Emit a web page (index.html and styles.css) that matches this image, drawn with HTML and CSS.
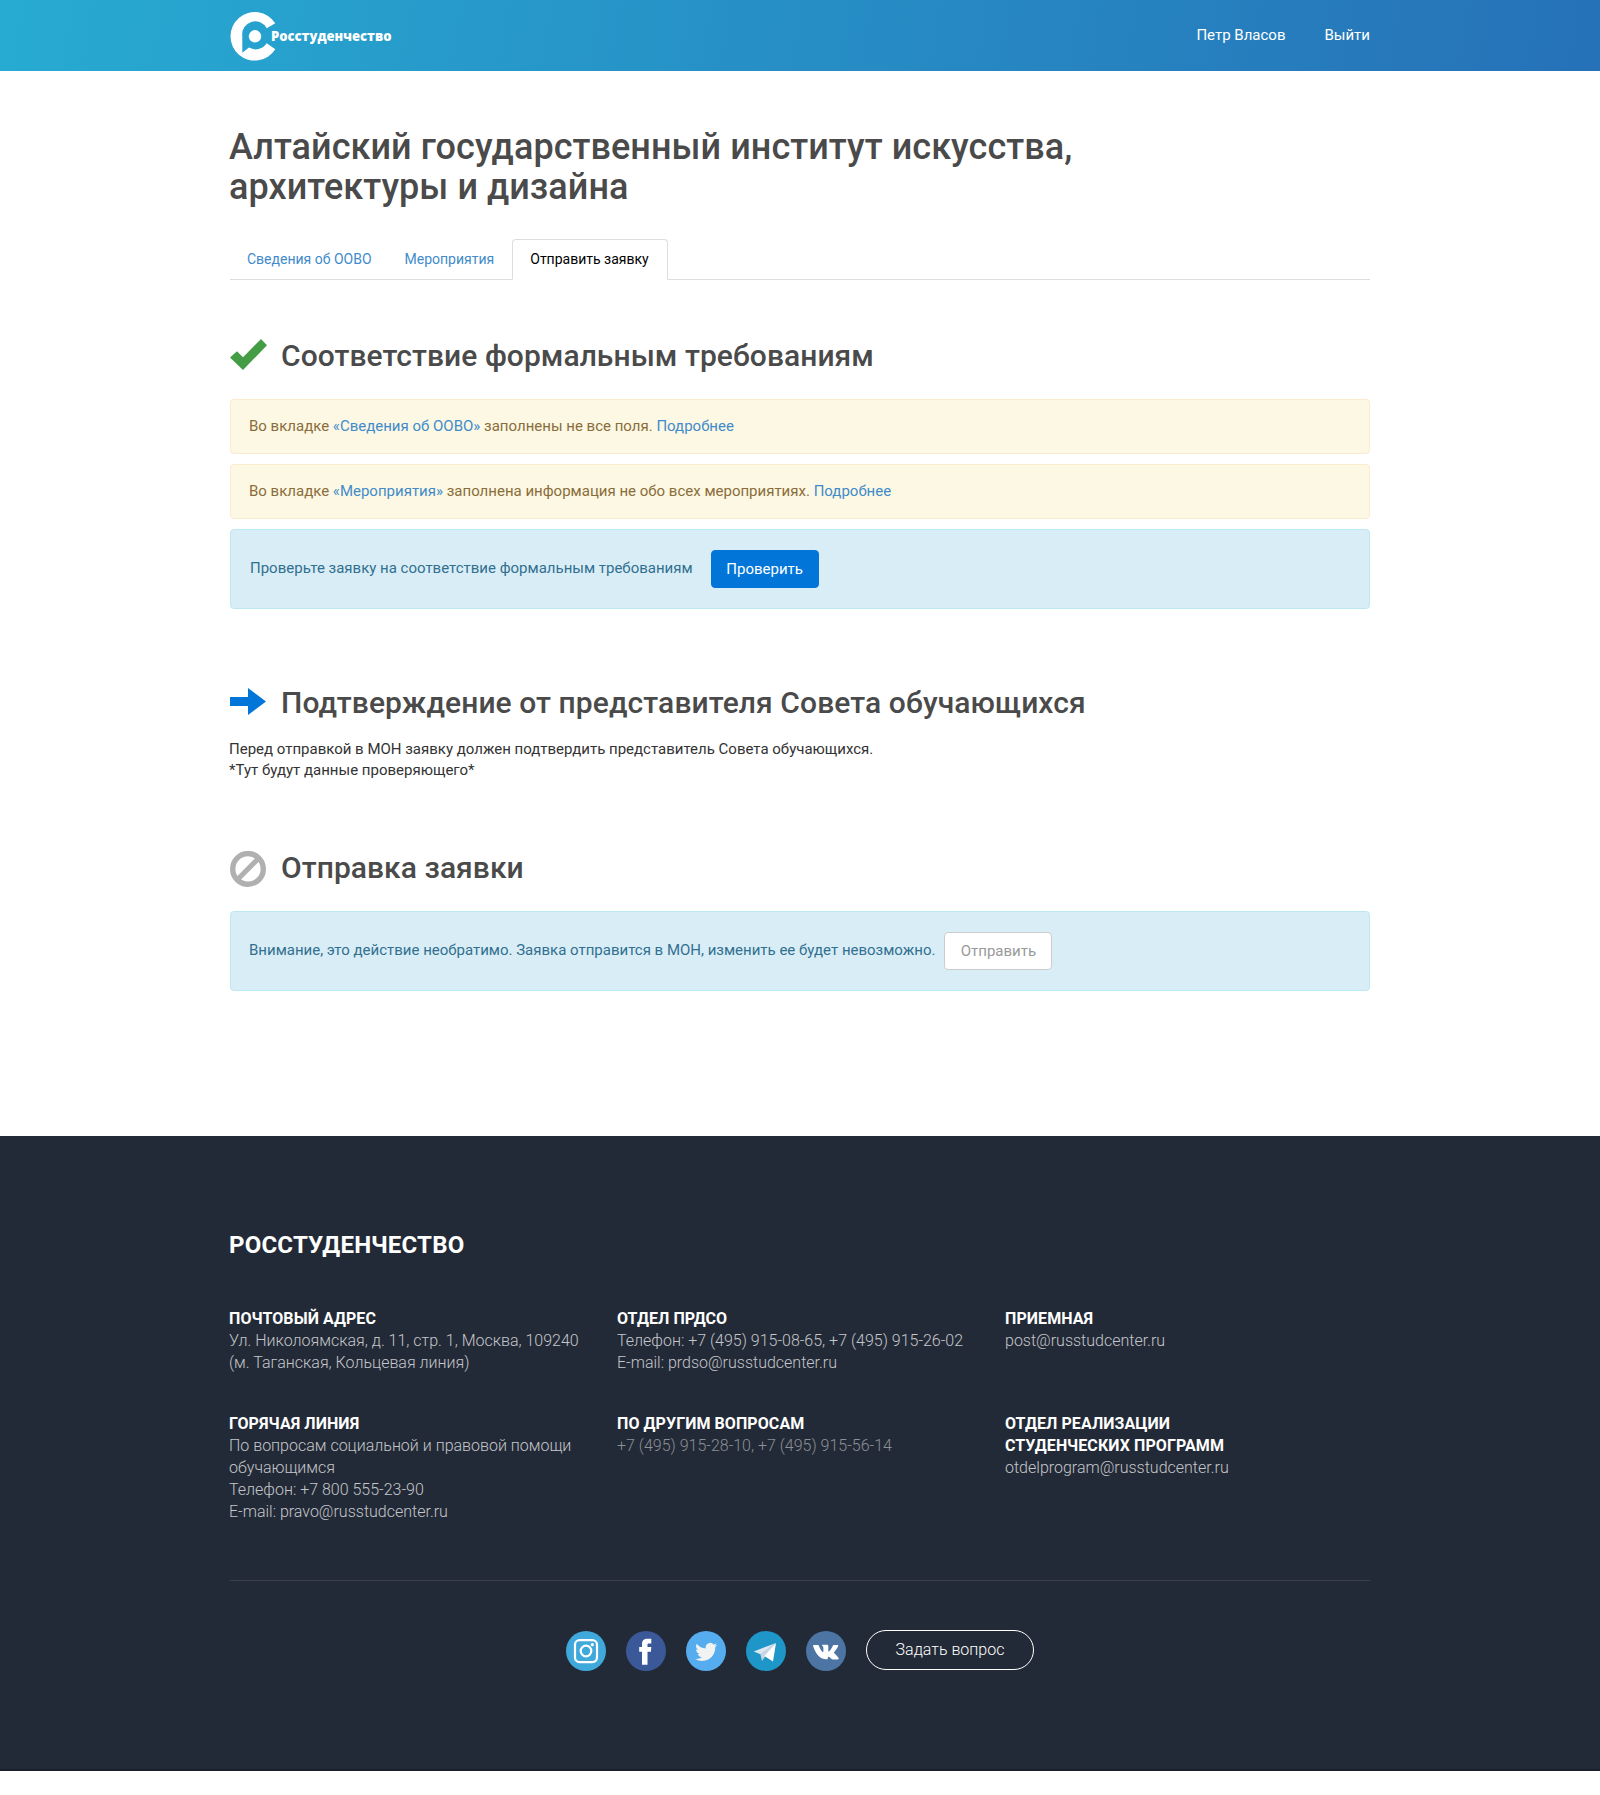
FILE: index.html
```html
<!DOCTYPE html>
<html lang="ru">
<head>
<meta charset="utf-8">
<title>Росстуденчество</title>
<link rel="stylesheet" href="styles.css">
</head>
<body>
<header class="header">
  <div class="container header-inner">
    <a class="logo" href="#">
      <svg width="170" height="71" viewBox="230 0 170 71" fill="#fff">
        <path d="M275.3 23.3A24.3 24.3 0 1 0 275.3 49.3L266.7 43.3A13.2 13.2 0 0 1 249 47.6L242.3 52.7V36A13 13 0 0 1 266.7 28.3Z"/>
        <circle cx="255" cy="36.3" r="6.2"/>
        <text class="logo-text" x="271" y="40.700" textLength="120.500" lengthAdjust="spacingAndGlyphs">Росстуденчество</text>
      </svg>
    </a>
    <nav class="user-nav"><a href="#">Петр Власов</a><a href="#">Выйти</a></nav>
  </div>
</header>

<main class="container main">
  <h1 class="title">Алтайский государственный институт искусства,<br>архитектуры и дизайна</h1>
  <ul class="tabs">
    <li><a class="tab tab-first" href="#">Сведения об ООВО</a></li>
    <li><a class="tab" href="#">Мероприятия</a></li>
    <li><a class="tab tab-active" href="#">Отправить заявку</a></li>
  </ul>

  <section class="step">
    <h2 class="step-title">
      <svg class="icon" width="37" height="37" viewBox="0 0 37 37"><path fill="#449d44" d="M0 18.5L7 12.3L13 18.3L31 0L37 6.3L13 31Z"/></svg>
      <span>Соответствие формальным требованиям</span>
    </h2>
    <div class="alert alert-warning">Во вкладке <a href="#">«Сведения об ООВО»</a> заполнены не все поля. <a href="#">Подробнее</a></div>
    <div class="alert alert-warning">Во вкладке <a href="#">«Мероприятия»</a> заполнена информация не обо всех мероприятиях. <a href="#">Подробнее</a></div>
    <div class="alert alert-info alert-check"><span>Проверьте заявку на соответствие формальным требованиям</span><button class="btn btn-primary">Проверить</button></div>
  </section>

  <section class="step step-confirm">
    <h2 class="step-title">
      <svg class="icon" width="37" height="37" viewBox="0 0 37 37"><path fill="#0275d8" d="M0 11H18V2L36 15.5L18 29V20H0Z"/></svg>
      <span>Подтверждение от представителя Совета обучающихся</span>
    </h2>
    <p class="text">Перед отправкой в МОН заявку должен подтвердить представитель Совета обучающихся.<br>*Тут будут данные проверяющего*</p>
  </section>

  <section class="step step-send">
    <h2 class="step-title">
      <svg class="icon" width="37" height="37" viewBox="0 1 37 37" fill="none" stroke="#b0b0b0"><circle cx="18" cy="18.9" r="15.3" stroke-width="5.4"/><path stroke-width="5" d="M7.5 29.4L28.5 8.4"/></svg>
      <span>Отправка заявки</span>
    </h2>
    <div class="alert alert-info"><span>Внимание, это действие необратимо. Заявка отправится в МОН, изменить ее будет невозможно.</span><button class="btn btn-default" disabled>Отправить</button></div>
  </section>
</main>

<footer class="footer">
  <div class="container">
    <div class="footer-title">РОССТУДЕНЧЕСТВО</div>
    <div class="contacts">
      <div><b>ПОЧТОВЫЙ АДРЕС</b><br>Ул. Николоямская, д. 11, стр. 1, Москва, 109240<br>(м. Таганская, Кольцевая линия)</div>
      <div><b>ОТДЕЛ ПРДСО</b><br>Телефон: +7 (495) 915-08-65, +7 (495) 915-26-02<br>E-mail: prdso@russtudcenter.ru</div>
      <div><b>ПРИЕМНАЯ</b><br>post@russtudcenter.ru</div>
      <div><b>ГОРЯЧАЯ ЛИНИЯ</b><br>По вопросам социальной и правовой помощи<br>обучающимся<br>Телефон: +7 800 555-23-90<br>E-mail: pravo@russtudcenter.ru</div>
      <div><b>ПО ДРУГИМ ВОПРОСАМ</b><br><span class="muted">+7 (495) 915-28-10, +7 (495) 915-56-14</span></div>
      <div><b>ОТДЕЛ РЕАЛИЗАЦИИ<br>СТУДЕНЧЕСКИХ ПРОГРАММ</b><br>otdelprogram@russtudcenter.ru</div>
    </div>
    <div class="social">
      <a href="#"><svg width="40" height="40" viewBox="0 0 40 40"><circle cx="20" cy="20" r="20" fill="#40a9dc"/><g fill="none" stroke="#fff" stroke-width="2.2"><rect x="9" y="9.1" width="22" height="22" rx="4.5"/><circle cx="20" cy="20" r="5.3"/></g><circle cx="26.3" cy="13.7" r="1.6" fill="#fff"/></svg></a>
      <a href="#"><svg width="40" height="40" viewBox="0 0 40 40"><circle cx="20" cy="20" r="20" fill="#3b5998"/><path fill="#fff" d="M16 33.7V20.7H13.2V16H16V13.2C16 9.5 18 7.8 21.5 7.8H25.3V12.5H22.8C21.8 12.5 21.5 13 21.5 13.8V16H25.3L24.9 20.7H21.5V33.7Z"/></svg></a>
      <a href="#"><svg width="40" height="40" viewBox="0 0 40 40"><circle cx="20" cy="20" r="20" fill="#55acee"/><path fill="#f1f2f2" transform="translate(9.2 9.8) scale(.93)" d="M23.6 4.6a9.7 9.7 0 0 1-2.8.8 4.900 4.900 0 0 0 2.100-2.700 9.900 9.900 0 0 1-3.100 1.200 4.900 4.900 0 0 0-8.400 4.500A13.900 13.900 0 0 1 1.700 3.200a4.900 4.900 0 0 0 1.500 6.500 4.800 4.800 0 0 1-2.200-.6 4.900 4.900 0 0 0 3.900 4.900 4.900 4.900 0 0 1-2.200.1 4.900 4.900 0 0 0 4.600 3.400A9.900 9.900 0 0 1 0 19.500a13.900 13.900 0 0 0 7.500 2.200c9.200 0 14.400-7.800 14-14.700a10 10 0 0 0 2.100-2.400z"/></svg></a>
      <a href="#"><svg width="40" height="40" viewBox="0 0 40 40"><circle cx="20" cy="20" r="20" fill="#1f96c8"/><path fill="#dfe8f1" d="M7.700 20.500L30 12L14.500 23.300Z"/><path fill="#c8d6e4" d="M14.300 22.800L16 30L18.800 26L30 12Z"/><path fill="#fff" d="M30 12L27 30.500L18.300 25Z"/></svg></a>
      <a href="#"><svg width="40" height="40" viewBox="0 0 40 40"><circle cx="20" cy="20" r="20" fill="#4c75a3"/><path fill="#fff" d="M19.500 28.300H21C21.600 28.300 21.800 27.900 21.800 27.300C21.800 25.500 22.600 25.200 23.800 26.300C25.100 27.600 25.500 28.400 27 28.400H31.500C32.700 28.400 33.100 27.700 32.400 26.700C31.600 25.400 30.300 24 28.600 22.500C27.900 21.800 27.900 21.500 28.500 20.700C29.800 19 31.400 16.900 32.200 14.900C32.400 14.300 32.100 14 31.500 14H27.900C27.300 14 27 14.300 26.800 14.800C25.800 17.200 24.700 18.900 23.500 20.100C22.700 20.900 22.300 20.600 22.300 19.700V15.300C22.300 14.200 22 13.700 21 13.700H16.500C15.900 13.700 15.700 14.100 16.100 14.500C17.300 15.700 17.400 16.200 17.400 18V20.300C17.400 21.200 16.800 21.200 16.100 20.400C14.800 18.900 13.700 17 13 15C12.700 14.300 12.500 14 11.800 14H8C7.200 14 6.900 14.400 7.100 15.100C8.900 20.700 13 28.300 19.500 28.300Z"/></svg></a>
      <a class="ask" href="#">Задать вопрос</a>
    </div>
  </div>
</footer>
</body>
</html>
```
FILE: styles.css
```css
* { box-sizing: border-box; }
body { margin: 0; background: #fff; color: #333; font: 15px/21.4px Roboto, "Liberation Sans", sans-serif; }
a { color: #428bca; text-decoration: none; }
.container { width: 1140px; margin: 0 auto; }

.header { height: 71px; background: linear-gradient(100deg, #27abd2 0%, #2671b8 100%); }
.header-inner { display: flex; justify-content: space-between; }
.logo svg { display: block; }
.logo-text { font: 800 14px "Open Sans", sans-serif; }
.user-nav { display: flex; gap: 39px; padding-top: 25px; }
.user-nav a { color: #fff; }

.main { height: 1065px; padding-top: 56px; }
.title { margin: 0 0 32px -1px; color: #4a4a4a; font-size: 36px; font-weight: 500; line-height: 40px; letter-spacing: .06px; }
.tabs { display: flex; gap: 2px; height: 41px; margin: 0; padding: 0; border-bottom: 1px solid #ddd; list-style: none; }
.tab { display: block; height: 41px; padding: 9px 15px 11px; border: 1px solid transparent; border-radius: 4px 4px 0 0; font-size: 14px; line-height: 20px; }
.tab-first { padding-right: 14px; padding-left: 16px; }
.tab-active { padding-right: 18px; padding-left: 17px; color: #000; background: #fff; border-color: #ddd #ddd #fff; }

.step { padding-top: 59px; }
.step-confirm { padding-top: 67px; }
.step-send { padding-top: 69px; }
.step-title { display: flex; align-items: flex-start; gap: 14px; height: 60px; margin: 0; color: #4a4a4a; font-size: 30px; font-weight: 500; line-height: 33px; letter-spacing: .055px; }
.step-confirm .step-title { height: 53px; letter-spacing: .09px; }
.step-send .step-title { line-height: 34px; }
.icon { flex: none; }
.alert { display: flex; align-items: center; height: 55px; margin-bottom: 10px; padding: 0 18px; border: 1px solid; border-radius: 4px; white-space: pre; }
.alert-warning { color: #8a6d3b; background: #fcf8e3; border-color: #faebcc; }
.alert-info { height: 80px; gap: 9px; color: #31708f; background: #d9edf7; border-color: #bce8f1; }
.alert-check { gap: 18px; padding-left: 19px; }
.btn { width: 108px; height: 38px; padding: 2px 0 0; border: 1px solid; border-radius: 4px; font: inherit; }
.btn-primary { color: #fff; background: #0275d8; border-color: #0275d8; }
.btn-default { color: #999; background: #fff; border-color: #ccc; }
.text { margin: 0 0 0 -1px; }

.footer { height: 635px; padding-top: 95px; color: #c3c6ca; background: #232a37; border-bottom: 2px solid #1b1f2b; font-size: 16px; font-weight: 300; line-height: 22px; }
.footer-title { height: 77px; margin-left: -1px; color: #fff; font-size: 24px; font-weight: 700; line-height: 28px; letter-spacing: .2px; }
.contacts { display: grid; grid-template-columns: 388px 388px 388px; grid-template-rows: 105px 167px; margin-left: -1px; }
.contacts b { color: #fff; font-weight: 700; letter-spacing: .08px; }
.muted { color: #8b8f96; }
.social { display: flex; justify-content: center; gap: 20px; padding-top: 50px; border-top: 1px solid #3b404c; }
.social svg { display: block; }
.ask { width: 168px; height: 40px; margin-top: -1px; border: 1px solid #fff; border-radius: 20px; color: #fff; line-height: 38px; text-align: center; }
```
